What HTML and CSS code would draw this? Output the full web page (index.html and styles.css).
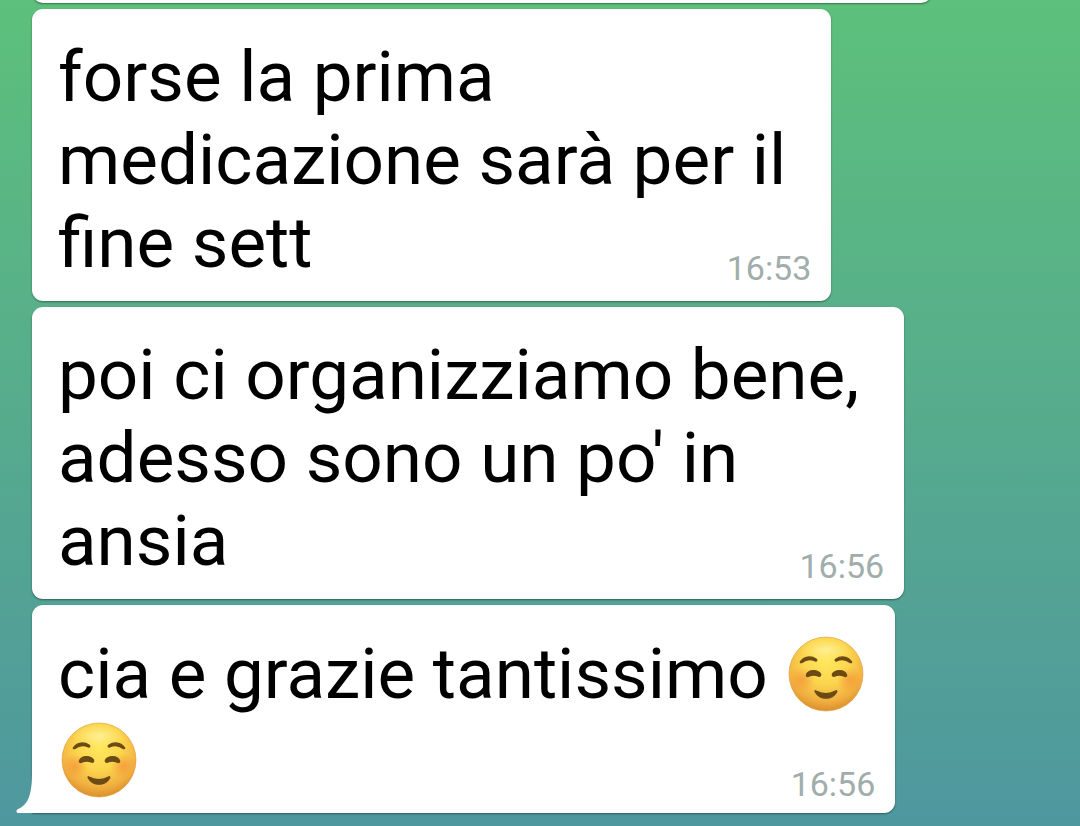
FILE: index.html
```
<!DOCTYPE html>
<html lang="it">

<head>
    <meta charset="UTF-8">
    <meta name="viewport" content="width=device-width, initial-scale=1.0">
    <title>Chat</title>
    <link rel="stylesheet" href="styles.css">
</head>

<body>
    <svg class="defs" aria-hidden="true">
        <defs>
            <radialGradient id="face" cx="50%" cy="32%" r="70%">
                <stop offset="0" stop-color="#ffe85e"/>
                <stop offset="0.45" stop-color="#fbd54e"/>
                <stop offset="0.78" stop-color="#f1b040"/>
                <stop offset="1" stop-color="#d88a2a"/>
            </radialGradient>
            <radialGradient id="shine" cx="50%" cy="50%" r="50%">
                <stop offset="0" stop-color="#fff3a8" stop-opacity="0.8"/>
                <stop offset="1" stop-color="#ffed7c" stop-opacity="0"/>
            </radialGradient>
            <radialGradient id="cheek">
                <stop offset="0" stop-color="#f58a35" stop-opacity="0.6"/>
                <stop offset="1" stop-color="#f58a35" stop-opacity="0"/>
            </radialGradient>
            <symbol id="smile" viewBox="0 0 76 76">
                <circle cx="38" cy="38" r="37" fill="url(#face)" stroke="#dd9a3c" stroke-opacity="0.6"/>
                <ellipse cx="38" cy="14" rx="26" ry="12" fill="url(#shine)"/>
                <circle cx="14" cy="44" r="13" fill="url(#cheek)"/>
                <circle cx="62" cy="44" r="13" fill="url(#cheek)"/>
                <g fill="#6b4a14" stroke="#6b4a14" stroke-width="1.2">
                    <path d="M12.500 25.500C16 20.500 23 19.500 28.300 23.200C29.500 24.200 28.600 25.400 27.300 24.900C22.500 22.800 18 23.400 14 26.400C12.900 27.200 11.800 26.500 12.500 25.500Z"/>
                    <path d="M63.500 25.500C60 20.500 53 19.500 47.700 23.200C46.500 24.200 47.400 25.400 48.700 24.900C53.500 22.800 58 23.400 62 26.400C63.100 27.200 64.200 26.500 63.500 25.500Z"/>
                    <path d="M18.500 38.500C20.500 33.500 29.500 33.200 32.500 37.800C33.300 39.600 32 41 30.400 40.100C27 38.700 24 38.700 20.800 40.300C19 41.200 17.800 40.100 18.500 38.500Z"/>
                    <path d="M58.500 38.500C56.500 33.500 47.500 33.200 44.500 37.800C43.700 39.600 45 41 46.600 40.100C50 38.700 53 38.700 56.200 40.300C58 41.200 59.200 40.100 58.500 38.500Z"/>
                    <path d="M28 55C34 58.400 42 58.400 47.500 55C48.700 54.300 49.200 55 48.600 56.200C44 64.200 32 64.200 27.400 56.200C26.600 55 27.100 54.300 28 55Z"/>
                </g>
            </symbol>
        </defs>
    </svg>

    <main class="chat">
        <div class="bubble previous"></div>

        <div class="bubble">
            <p class="text">forse la prima<br>medicazione sarà per il<br>fine sett</p>
            <time class="time">16:53</time>
        </div>

        <div class="bubble">
            <p class="text">poi ci organizziamo bene,<br>adesso sono un po' in<br>ansia</p>
            <time class="time">16:56</time>
        </div>

        <div class="bubble last">
            <p class="text">cia e grazie tantissimo <svg class="emoji" role="img" aria-label="sorriso"><use href="#smile"/></svg><br><svg class="emoji" role="img" aria-label="sorriso"><use href="#smile"/></svg></p>
            <time class="time">16:56</time>
            <svg class="tail" viewBox="0 0 20 44" aria-hidden="true">
                <path d="M16 0V4C16 26 12 36 2 40C0 41 0 44 2 44H20V0Z" fill="#fff"/>
            </svg>
        </div>
    </main>
</body>
</html>
```
FILE: styles.css
```
body {
    margin: 0;
    min-height: 100vh;
    font-family: Roboto, sans-serif;
    color: #000;
    background: linear-gradient(#5dc07b, #4f979f);
}

.defs {
    position: absolute;
    width: 0;
    height: 0;
}

.chat {
    display: flex;
    flex-direction: column;
    align-items: flex-start;
    gap: 6px;
    padding: 0 32px 12px;
    overflow: hidden;
}

/* text and time share one cell, the time sits in its lower right corner */
.bubble {
    display: grid;
    position: relative;
    box-sizing: border-box;
    max-width: 100%;
    padding: 26px 20px 17px 26px;
    background-color: #fff;
    border-radius: 11px;
    box-shadow: 0 1px 2px rgba(0, 0, 0, 0.4);
}

/* end of the message above */
.previous {
    width: 900px;
    height: 40px;
    margin-top: -37px;
    padding: 0;
}

.text {
    grid-area: 1 / 1;
    margin: 0;
    padding-right: 25px;
    font-size: 71px;
    line-height: 83px;
}

.time {
    grid-area: 1 / 1;
    align-self: end;
    justify-self: end;
    font-size: 34px;
    line-height: 32px;
    color: #a0adab;
}

.last {
    padding-bottom: 10px;
    border-bottom-left-radius: 0;
}

.last .text {
    padding-right: 8px;
    line-height: 86px;
}

.last .time {
    padding-bottom: 3px;
}

.emoji {
    width: 76px;
    height: 76px;
    margin: 0 3px;
    vertical-align: -14px;
}

.tail {
    position: absolute;
    left: -16px;
    bottom: 0;
    width: 20px;
    height: 44px;
}
```
